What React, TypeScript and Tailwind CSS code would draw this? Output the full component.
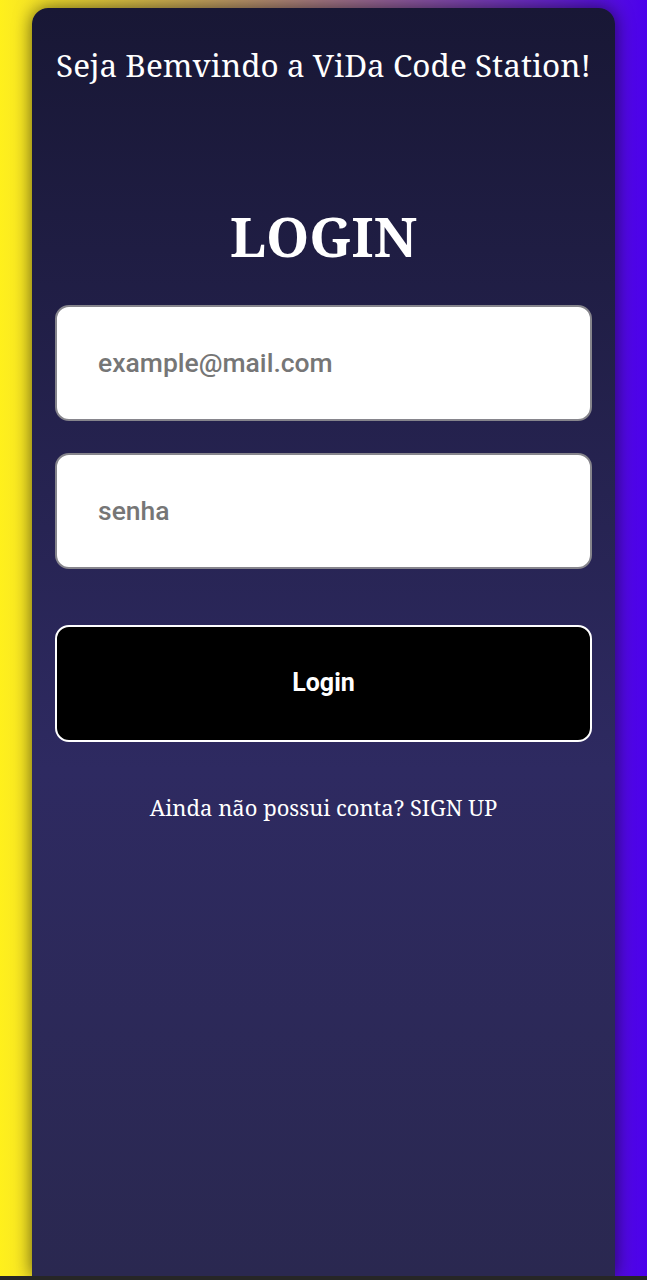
export default function App() {
  return (
    <div className="h-[1280px] flex flex-col overflow-hidden">
      <div className="flex-1 flex pl-[32px] pt-2 bg-[linear-gradient(to_right,#fff01c,#4b00ec)] overflow-hidden">
        <div className="w-[583px] rounded-t-2xl bg-[linear-gradient(to_bottom,#181735,#2e2a61_60%,#2a2850)] shadow-[0_0_18px_rgba(0,0,0,0.6)] px-[23px] flex flex-col">
          <h1 className="text-white text-center text-[31.5px] leading-none mt-[41px] font-['Noto_Serif','DejaVu_Serif',serif]">
            Seja Bemvindo a ViDa Code Station!
          </h1>

          <h2 className="text-white text-center text-[55px] font-bold leading-none mt-[127px] font-['Noto_Serif','DejaVu_Serif',serif]">
            LOGIN
          </h2>

          <form className="mt-[42px] flex flex-col">
            <input
              type="email"
              placeholder="example@mail.com"
              className="h-[116px] w-full bg-white rounded-[14px] border-2 border-[#86858c] px-[41px] text-[26.5px] font-medium text-[#333] placeholder:text-[#767676] outline-none font-['Roboto',sans-serif]"
            />
            <input
              type="password"
              placeholder="senha"
              className="mt-[32px] h-[116px] w-full bg-white rounded-[14px] border-2 border-[#86858c] px-[41px] text-[26.5px] font-medium text-[#333] placeholder:text-[#767676] outline-none font-['Roboto',sans-serif]"
            />
            <button
              type="submit"
              className="mt-[56px] h-[117px] w-full bg-black text-white rounded-[14px] border-2 border-white text-[25px] font-bold font-['Roboto',sans-serif]"
            >
              Login
            </button>
          </form>

          <p className="mt-[49px] text-white text-center text-[22px] font-['Noto_Serif','DejaVu_Serif',serif]">
            Ainda não possui conta? SIGN UP
          </p>
        </div>
      </div>
      <div className="h-[4px] bg-[#262626]" />
    </div>
  );
}
